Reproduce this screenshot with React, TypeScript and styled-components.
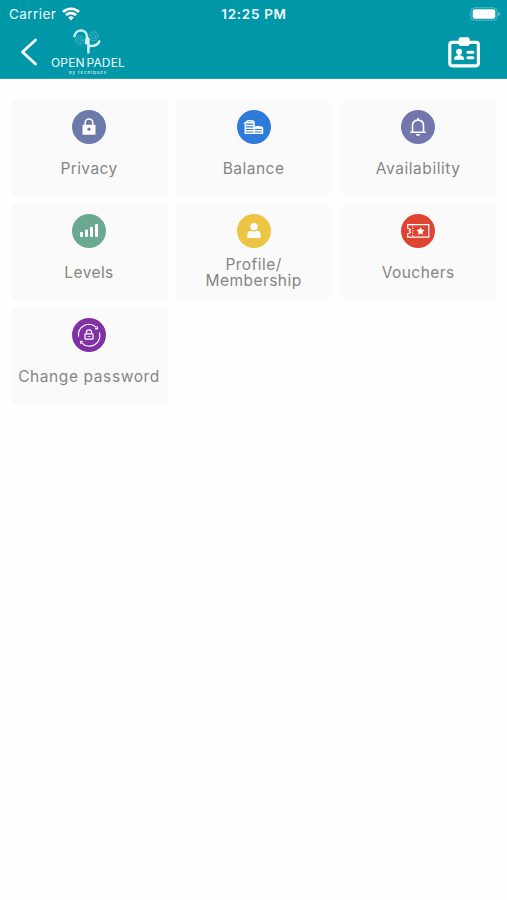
import React from "react";
import styled, { createGlobalStyle } from "styled-components";

const GlobalStyle = createGlobalStyle`
  * { box-sizing: border-box; }
  body { margin: 0; background: #fff; font-family: Inter, "Open Sans", sans-serif; }
  svg { display: block; }
`;

const Screen = styled.main`
  width: 100%;
  min-height: 900px;
  background: #fefefe;
`;

const Header = styled.header`
  height: 79px;
  background: #0097a9;
  color: #effbfc;
  border-bottom: 1px solid #2ba6b5;
`;

const StatusBar = styled.div`
  height: 28px;
  display: grid;
  grid-template-columns: 1fr auto 1fr;
  align-items: center;
  padding: 0 8px 0 9px;
`;

const Carrier = styled.div`
  display: flex;
  align-items: center;
  gap: 6px;
  font-size: 13.5px;
  letter-spacing: 0.45px;
`;

const Time = styled.time`
  font-size: 13.5px;
  font-weight: 600;
  letter-spacing: 0.7px;
`;

const Battery = styled.div`
  justify-self: end;
  margin-right: -2px;
`;

const NavBar = styled.nav`
  height: 50px;
  display: flex;
  align-items: flex-start;
  padding: 0 26px 0 20px;
`;

const NavButton = styled.button<{ $top: number }>`
  padding: 0;
  margin: ${(p) => p.$top}px 0 0;
  border: 0;
  background: none;
  color: #fff;
`;

const Brand = styled.div`
  width: 76px;
  margin: 0 auto 0 12px;
  display: flex;
  flex-direction: column;
  align-items: center;
`;

const BrandName = styled.span`
  margin-top: 2px;
  font-size: 12px;
  line-height: 14px;
  letter-spacing: 0.15px;
  word-spacing: -1.8px;
  white-space: nowrap;
`;

const BrandBy = styled.span`
  font-size: 4px;
  line-height: 6px;
  font-weight: 600;
  letter-spacing: 1.1px;
  white-space: nowrap;
  color: #d5f0f3;
`;

const Grid = styled.section`
  display: grid;
  grid-template-columns: repeat(3, 156px);
  grid-auto-rows: 96px;
  column-gap: 8.6px;
  row-gap: 8px;
  padding: 21px 0 0 11px;
`;

const Card = styled.article`
  display: flex;
  flex-direction: column;
  align-items: center;
  padding-top: 10px;
  border-radius: 5px;
  background: #fafafa;
`;

const Disc = styled.div<{ $color: string }>`
  width: 34px;
  height: 34px;
  border-radius: 50%;
  background: ${(p) => p.$color};
`;

const Label = styled.div<{ $spacing: number }>`
  height: 32px;
  margin-top: 9px;
  display: flex;
  align-items: center;
  text-align: center;
  white-space: pre-line;
  font-size: 15.5px;
  line-height: 16px;
  letter-spacing: ${(p) => p.$spacing}px;
  color: #858585;
`;

const Icon = ({ children }: { children: React.ReactNode }) => (
  <svg width="34" height="34" viewBox="0 0 34 34" fill="none" stroke="#fff" strokeWidth="1.4">
    {children}
  </svg>
);

const items = [
  {
    label: "Privacy", color: "#6c7aaa", spacing: 0.4,
    icon: <><path d="M13.2 16v-3.2a3.8 3.8 0 0 1 7.6 0V16" strokeWidth="1.6" /><rect x="10.5" y="14.8" width="13" height="10" rx="1" fill="#fff" stroke="none" /><circle cx="17" cy="19.2" r="1.6" fill="#6c7aaa" stroke="none" /></>,
  },
  {
    label: "Balance", color: "#2f7bdc", spacing: 0.5,
    icon: <path d="M8.3 24V12.2M8.3 23.2h17.2v-4.9c0-.7-1.8-1.5-4.2-1.5s-4.3.8-4.3 1.5V12c0-.8-1.8-1.3-3.8-1.3H11L8.3 12.8H17M8.3 15.5H17M8.3 18.2h17.2M8.3 20.7h17.2M17 18v5" strokeWidth="1.4" />,
  },
  {
    label: "Availability", color: "#7376ad", spacing: 0.55,
    icon: <><path d="M11.5 22v-6.4c0-3.3 2-5.5 5.5-5.5s5.5 2.2 5.5 5.5V22M9.2 22.2h15.6" strokeWidth="1.6" /><path d="M17 8v2M15.3 24.8h3.4" strokeWidth="1.8" /></>,
  },
  {
    label: "Levels", color: "#6aa891", spacing: 0.4,
    icon: <><rect x="8" y="18" width="3" height="5" rx="1" fill="#fff" stroke="none" /><rect x="13" y="15.5" width="3" height="7.5" rx="1" fill="#fff" stroke="none" /><rect x="18" y="12.8" width="3" height="10.2" rx="1" fill="#fff" stroke="none" /><rect x="23" y="10" width="3" height="13" rx="1" fill="#fff" stroke="none" /></>,
  },
  {
    label: "Profile/\nMembership", color: "#ebc543", spacing: 0.45,
    icon: <><circle cx="17" cy="12.6" r="3.7" fill="#fff" stroke="none" /><path d="M10.4 24v-3.7c0-2.1 1.3-3.6 3.5-3.6 2 1.2 4.2 1.2 6.2 0 2.2 0 3.5 1.5 3.5 3.6V24z" fill="#fff" stroke="none" /></>,
  },
  {
    label: "Vouchers", color: "#df4332", spacing: 0.45,
    icon: <><path d="M6.7 10.7h21.1v12.5H6.7v-3.4l2.8-1.3-1.2-1.5 1.2-1.6-2.8-1.2z" strokeWidth="1.2" /><path d="M11.8 11v12" strokeWidth=".8" strokeDasharray="1.5 1" /><path d="M19.5 13l1.2 2.5 2.8.4-2 2 .5 2.8-2.5-1.3-2.5 1.3.5-2.8-2-2 2.8-.4z" fill="#fff" stroke="none" /></>,
  },
  {
    label: "Change password", color: "#8131a6", spacing: 0.6,
    icon: <><path d="M6.6 18.6A10.5 10.5 0 0 1 24.3 9.4M27.4 14.5A10.5 10.5 0 0 1 9.7 24.8" strokeWidth="1.1" /><path d="M25.2 8.3l.3 2.6-2.6-.3M8.8 26l-.3-2.6 2.6.3" strokeWidth="1.1" /><rect x="13" y="15.8" width="8" height="5.4" rx=".7" strokeWidth="1.2" /><path d="M14.4 15.8v-1.4a2.6 2.6 0 0 1 5.2 0v1.4" strokeWidth="1.2" /><path d="M15.5 18.5h3" strokeWidth=".8" /></>,
  },
];

export default function App() {
  return (
    <Screen>
      <GlobalStyle />
      <Header>
        <StatusBar>
          <Carrier>
            Carrier
            <svg width="18" height="14" viewBox="0 0 18 14" fill="none" stroke="#fff" strokeWidth="2.6">
              <path d="M1 5a11.4 11.4 0 0 1 16 0M4 8.2a7.1 7.1 0 0 1 10 0" />
              <path d="M9 13.5l-2.8-3a4 4 0 0 1 5.6 0z" fill="#fff" stroke="none" />
            </svg>
          </Carrier>
          <Time>12:25 PM</Time>
          <Battery>
            <svg width="31" height="14" viewBox="0 0 31 14">
              <rect x=".8" y=".8" width="26.4" height="12.4" rx="3.8" fill="none" stroke="#5bbdc9" strokeWidth="1" />
              <rect x="2.7" y="2.2" width="22.6" height="9.6" rx="2" fill="#fff" />
              <path d="M28.5 4.8c2 .7 2 3.7 0 4.4z" fill="#76c8d2" />
            </svg>
          </Battery>
        </StatusBar>
        <NavBar>
          <NavButton $top={10} aria-label="Back">
            <svg width="18" height="28" viewBox="0 0 18 28" fill="none" stroke="#fff" strokeWidth="2.8" strokeLinecap="round" strokeLinejoin="round">
              <path d="M15.5 2L2.5 14l13 12" />
            </svg>
          </NavButton>
          <Brand>
            <svg width="30" height="26" viewBox="0 0 30 26" fill="none" stroke="#d5f2f5">
              <g stroke="#72c5cf" strokeWidth=".9" strokeDasharray="1.2 .5">
                <circle cx="7" cy="12" r="4.2" /><circle cx="7" cy="12" r="2" />
                <circle cx="20.5" cy="8.3" r="4.4" /><circle cx="20.5" cy="8.3" r="2.2" />
              </g>
              <path d="M1.5 8.2C2.5.5 13.7.3 14 8.6c0 2.4-1 4.5-.8 6.7M15.4 24.6V11M15.6 18c5 .4 9.3-.8 10.6-4.5" strokeWidth="2.5" strokeLinecap="round" />
              <path d="M2 7.8C4 1 13 .8 13.8 8" stroke="#57b9c5" strokeWidth=".6" strokeDasharray="1 1" />
            </svg>
            <BrandName>OPEN PADEL</BrandName>
            <BrandBy>by tecniques</BrandBy>
          </Brand>
          <NavButton $top={9} aria-label="Member card">
            <svg width="34" height="32" viewBox="0 0 34 32" fill="none">
              <rect x="2.8" y="5.3" width="28.6" height="23.5" rx="2.5" stroke="#fff" strokeWidth="3.2" />
              <rect x="11.6" y=".3" width="11" height="8.7" rx="2" fill="#fff" />
              <circle cx="12.1" cy="14.7" r="3" fill="#fff" />
              <path d="M10.9 16h2.4v2.5c2.1.3 3.8 1.2 3.8 3.2v1H7v-1c0-2 1.8-2.9 3.9-3.2z" fill="#fff" />
              <path d="M20.9 15.2h5M20.9 20.8h5" stroke="#fff" strokeWidth="3" strokeLinecap="round" />
            </svg>
          </NavButton>
        </NavBar>
      </Header>
      <Grid>
        {items.map((item) => (
          <Card key={item.label}>
            <Disc $color={item.color}><Icon>{item.icon}</Icon></Disc>
            <Label $spacing={item.spacing}>{item.label}</Label>
          </Card>
        ))}
      </Grid>
    </Screen>
  );
}
